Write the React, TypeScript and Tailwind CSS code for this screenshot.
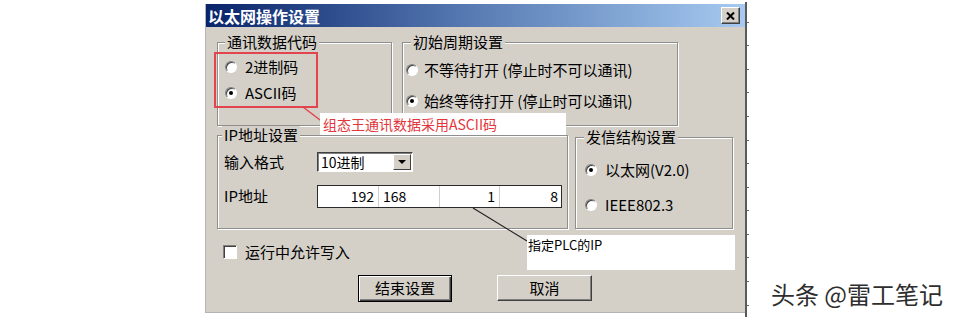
import type { ReactNode } from "react";

const Radio = ({ checked }: { checked?: boolean }) => (
  <span className="flex h-[12px] w-[12px] shrink-0 items-center justify-center rounded-full border border-t-[#808080] border-l-[#808080] border-b-white border-r-white bg-white shadow-[inset_1px_1px_0_#404040]">
    {checked && <span className="h-[4px] w-[4px] rounded-full bg-black" />}
  </span>
);

const RadioRow = ({ checked, gap, children }: { checked?: boolean; gap: string; children: ReactNode }) => (
  <div className={`flex h-[20px] items-center ${gap}`}>
    <Radio checked={checked} />
    <span className="leading-[20px]">{children}</span>
  </div>
);

const Group = ({
  title,
  legendLeft,
  className,
  children,
}: {
  title: string;
  legendLeft: string;
  className: string;
  children: ReactNode;
}) => (
  <div
    className={`relative shrink-0 border border-[#8e8e8e] shadow-[1px_1px_0_#ffffff,inset_1px_1px_0_#ffffff] ${className}`}
  >
    <span
      className={`absolute top-[-10px] bg-[#d4d0c8] px-[2px] leading-[18px] ${legendLeft}`}
    >
      {title}
    </span>
    {children}
  </div>
);

const Ruler = () => (
  <div className="w-[6px] shrink-0">
    <svg width="6" height="317" viewBox="0 0 6 317">
      <rect x="0" y="2" width="2" height="315" fill="#5a5a5a" />
      {[22, 45, 69, 92, 116, 140, 163, 187, 210, 234, 257, 281, 305].map((y) => (
        <rect key={y} x="2" y={y} width="2" height="1" fill="#6a6a6a" />
      ))}
    </svg>
  </div>
);

export default function App() {
  return (
    <div className="relative flex h-[317px] w-[954px] overflow-hidden bg-white font-['Noto_Sans_CJK_SC',sans-serif] text-[15px] text-black">
      <div className="w-[205px] shrink-0" />

      {/* dialog */}
      <div className="mt-[4px] flex h-[309px] w-[540px] shrink-0 flex-col border-b border-l border-[#b4b4b4] bg-[#d4d0c8]">
        {/* title bar */}
        <div className="flex h-[23px] shrink-0 items-center justify-between bg-gradient-to-r from-[#0a246a] via-[#5a7cb4] to-[#a6caf0] pl-[2px] pr-[5px]">
          <span className="text-[16px] font-bold leading-none text-white">以太网操作设置</span>
          <span className="flex h-[17px] w-[19px] items-center justify-center border border-t-white border-l-white border-b-[#404040] border-r-[#404040] bg-[#d4d0c8] shadow-[inset_-1px_-1px_0_#808080]">
            <svg width="9" height="8" viewBox="0 0 9 8">
              <path d="M1 0.5 L8 7.5 M8 0.5 L1 7.5" stroke="#000" strokeWidth="2" />
            </svg>
          </span>
        </div>

        <div className="flex flex-col pl-[11px]">
          {/* row 1 */}
          <div className="mt-[15px] flex gap-[10px]">
            <Group title="通讯数据代码" legendLeft="left-[7px]" className="h-[84px] w-[175px]">
              <div className="flex flex-col gap-[6px] pl-[7px] pt-[14px]">
                <RadioRow gap="gap-[8px]">2进制码</RadioRow>
                <RadioRow checked gap="gap-[8px]">
                  ASCII码
                </RadioRow>
              </div>
            </Group>
            <Group title="初始周期设置" legendLeft="left-[8px]" className="h-[84px] w-[276px]">
              <div className="flex flex-col gap-[11px] pl-[3px] pt-[17px]">
                <RadioRow gap="gap-[6px]">不等待打开 (停止时不可以通讯)</RadioRow>
                <RadioRow checked gap="gap-[6px]">
                  始终等待打开 (停止时可以通讯)
                </RadioRow>
              </div>
            </Group>
          </div>

          {/* row 2 */}
          <div className="mt-[9px] flex items-start gap-[7px]">
            <Group title="IP地址设置" legendLeft="left-[4px]" className="h-[94px] w-[351px]">
              <div className="flex flex-col gap-[13px] pl-[6px] pt-[16px]">
                <div className="flex h-[20px] items-center">
                  <span className="w-[93px]">输入格式</span>
                  <div className="flex h-[20px] w-[96px] items-center justify-between border border-t-[#404040] border-l-[#404040] border-b-white border-r-white bg-white pr-[1px] shadow-[inset_1px_1px_0_#808080]">
                    <span className="pl-[3px] text-[14px] leading-none">10进制</span>
                    <span className="flex h-[16px] w-[18px] items-center justify-center border border-t-white border-l-white border-b-[#404040] border-r-[#404040] bg-[#d4d0c8]">
                      <svg width="8" height="4" viewBox="0 0 8 4">
                        <path d="M0 0 H8 L4 4 Z" fill="#000" />
                      </svg>
                    </span>
                  </div>
                </div>
                <div className="flex h-[23px] items-center">
                  <span className="w-[93px]">IP地址</span>
                  <div className="flex h-[23px] w-[245px] border border-[#2b2b2b] bg-white text-[14px] leading-[21px]">
                    <span className="w-[61px] border-r border-[#cfcfcf] pr-[4px] text-right">192</span>
                    <span className="w-[61px] border-r border-[#cfcfcf] pl-[4px]">168</span>
                    <span className="w-[60px] border-r border-[#cfcfcf] pr-[4px] text-right">1</span>
                    <span className="flex-1 pr-[3px] text-right">8</span>
                  </div>
                </div>
              </div>
            </Group>
            <Group title="发信结构设置" legendLeft="left-[8px]" className="mt-[2px] h-[92px] w-[158px]">
              <div className="flex flex-col gap-[15px] pl-[9px] pt-[22px]">
                <RadioRow checked gap="gap-[8px]">
                  以太网(V2.0)
                </RadioRow>
                <RadioRow gap="gap-[8px]">IEEE802.3</RadioRow>
              </div>
            </Group>
          </div>

          {/* checkbox */}
          <div className="mt-[13px] flex h-[20px] items-center gap-[8px] pl-[6px]">
            <span className="h-[14px] w-[14px] border border-t-[#808080] border-l-[#808080] border-b-white border-r-white bg-white shadow-[inset_1px_1px_0_#404040]" />
            <span>运行中允许写入</span>
          </div>

          {/* buttons */}
          <div className="mt-[13px] flex items-start gap-[45px] pl-[141px]">
            <button className="flex h-[27px] w-[94px] items-center justify-center border border-black bg-[#d4d0c8] text-[15px] shadow-[inset_1px_1px_0_#ffffff,inset_-1px_-1px_0_#404040,inset_-2px_-2px_0_#808080]">
              结束设置
            </button>
            <button className="flex h-[26px] w-[95px] items-center justify-center border border-t-white border-l-white border-b-[#404040] border-r-[#404040] bg-[#d4d0c8] text-[15px] shadow-[inset_-1px_-1px_0_#808080]">
              取消
            </button>
          </div>
        </div>
      </div>

      <Ruler />

      <div className="flex flex-1 items-end justify-end pb-[11px] pr-[11px]">
        <span className="text-[24px] leading-none text-[#2e2e2e] [text-shadow:0_0_2px_#ffffff]">头条 @雷工笔记</span>
      </div>

      {/* annotations */}
      <div className="absolute left-[214px] top-[52px] h-[56px] w-[104px] border-2 border-[#e2454d]" />
      <svg className="absolute left-0 top-0" width="954" height="317" viewBox="0 0 954 317">
        <line x1="303" y1="107" x2="324" y2="123" stroke="#e2454d" strokeWidth="1.5" />
        <line x1="473" y1="208" x2="527" y2="241" stroke="#222" strokeWidth="1.2" />
      </svg>
      <div className="absolute left-[320px] top-[113px] h-[22px] w-[246px] bg-white pl-[3px] text-[14px] leading-[22px] text-[#e2363c]">
        组态王通讯数据采用ASCII码
      </div>
      <div className="absolute left-[527px] top-[235px] h-[35px] w-[208px] bg-white pl-[1px] pt-[2px] text-[13px] leading-[16px]">
        指定PLC的IP
      </div>
    </div>
  );
}
